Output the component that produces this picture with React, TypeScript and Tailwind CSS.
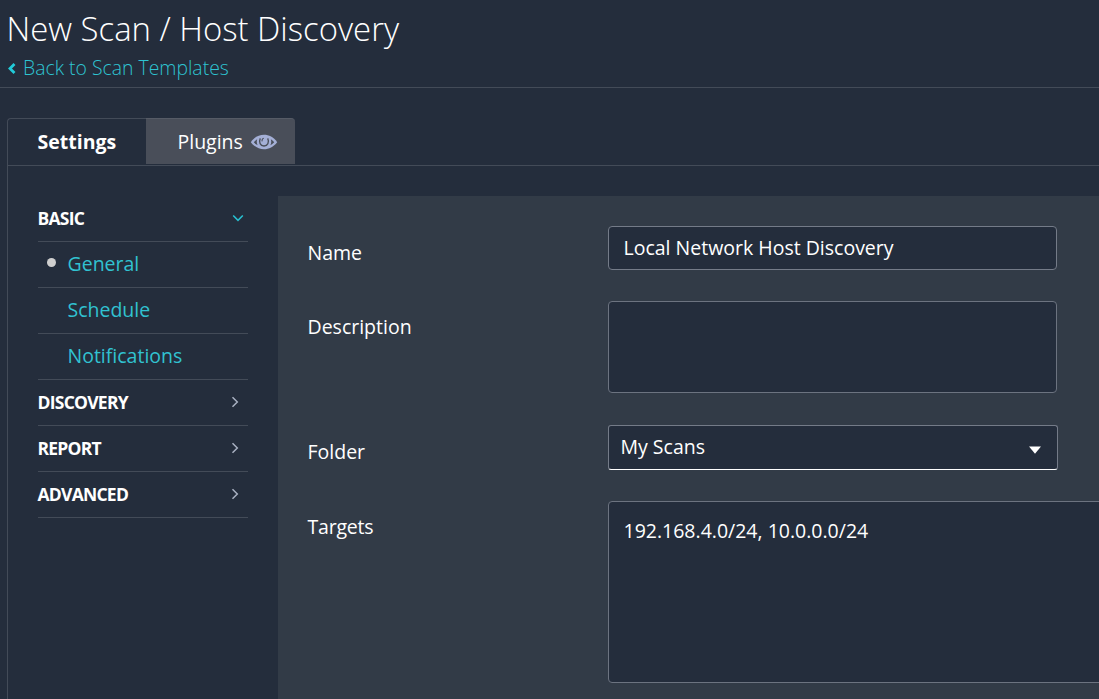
import type { ReactNode } from "react";

const BASIC_ITEMS = ["General", "Schedule", "Notifications"];
const SECTIONS = ["DISCOVERY", "REPORT", "ADVANCED"];

function EyeIcon() {
  return (
    <svg className="ml-[7.5px] mt-px h-[16px] w-[28px]" viewBox="0 0 28 16">
      <path d="M0.8 8.2C4.5 3 9 0.8 14 0.8s9.500 2.200 13.200 7.400C23.500 13 19 15.200 14 15.200S4.500 13 0.800 8.200Z" fill="#a4afd6" />
      <path d="M7.200 5.200C5.500 6.100 4.700 7.300 3.800 8.300c1 1 2 2 3.800 2.900C6.600 9.300 6.500 7.200 7.200 5.200ZM20.800 5.200c1.700.9 2.500 2.100 3.400 3.100-1 1-2 2-3.800 2.900 1-1.900 1.100-4 .4-6Z" fill="#494e59" />
      <path d="M10.300 4.400C8.500 8.200 10.300 12 14 12s5.500-3.800 3.700-7.600" fill="none" stroke="#494e59" strokeWidth="1.300" />
      <path d="M13.800 4.300C12.300 4.600 11.700 6 12.200 7.400" fill="none" stroke="#494e59" strokeWidth="1.100" />
    </svg>
  );
}

function Row({ label, top, children }: { label: string; top: string; children: ReactNode }) {
  return (
    <div className="flex items-start">
      <span className={`w-[300px] shrink-0 leading-[28px] ${top}`}>{label}</span>
      {children}
    </div>
  );
}

export default function App() {
  return (
    <div className="flex h-[699px] w-[1099px] flex-col overflow-hidden bg-[#242d3c] font-['Open_Sans',sans-serif] text-[19.5px] text-white">
      <header className="h-[88px] shrink-0 border-b border-[#434b58] pl-[7px]">
        <h1 className="-ml-[0.5px] pt-[5px] text-[32.900px] leading-[48px] font-light whitespace-nowrap">New Scan / Host Discovery</h1>
        <a className="mt-px flex items-center text-[19.400px] leading-[28px] font-light text-[#2ec4d2]">
          <svg className="mr-[7px] h-[11px] w-[9px]" viewBox="0 0 9 11">
            <path d="M7.500 1 3 5.500l4.500 4.500" fill="none" stroke="#22cbd9" strokeWidth="2.800" />
          </svg>
          Back to Scan Templates
        </a>
      </header>
      <div className="ml-[7px] mt-[30px] flex h-[48px] shrink-0 border-b border-[#434b58]">
        <div className="flex w-[139px] items-center rounded-tl border-t border-l border-[#434b58] pl-[29.500px] font-bold">Settings</div>
        <div className="flex h-[46px] w-[149px] items-center rounded-tr border-t border-[#565b66] bg-[#494e59] pl-[31.500px]">
          Plugins
          <EyeIcon />
        </div>
      </div>
      <div className="ml-[7px] flex flex-1 border-l border-[#434b58] pt-[30px] pl-[30px]">
        <nav className="mr-[30px] w-[210px] shrink-0">
          <div className="flex h-[46px] items-center justify-between border-b border-[#434b58] text-[17.500px] tracking-[-0.75px] font-bold">
            <span className="-ml-[0.5px]">BASIC</span>
            <svg className="mr-[4px] mb-[2px] h-[8px] w-[12px]" viewBox="0 0 12 8">
              <path d="m1.200 1.500 4.800 4.800 4.800-4.800" fill="none" stroke="#28bfd0" strokeWidth="1.600" />
            </svg>
          </div>
          {BASIC_ITEMS.map((item, i) => (
            <div key={item} className="flex h-[46px] items-center border-b border-[#434b58] pb-[2px] text-[#31c2d1]">
              <span className="flex w-[29.500px] pl-[9px]">
                {i === 0 && <span className="-mt-[2px] size-[9px] rounded-full bg-[#cfcfcf]" />}
              </span>
              {item}
            </div>
          ))}
          {SECTIONS.map((item) => (
            <div key={item} className="flex h-[46px] items-center justify-between border-b border-[#434b58] text-[17.500px] tracking-[-0.75px] font-bold">
              <span className="-ml-[0.5px]">{item}</span>
              <svg className="mr-[9px] mb-[1px] h-[12px] w-[8px]" viewBox="0 0 8 12">
                <path d="m1.500 1.200 4.800 4.800-4.800 4.800" fill="none" stroke="#a9b1c2" strokeWidth="1.500" />
              </svg>
            </div>
          ))}
        </nav>
        <main className="flex flex-1 flex-col overflow-hidden bg-[#323b47] pt-[30px] pl-[29.500px]">
          <div className="h-[75px]">
            <Row label="Name" top="pt-[13px]">
              <input className="ml-[0.5px] h-[44px] w-[449px] rounded border border-[#747b88] bg-[#242d3c] px-[14.500px] pb-[2px] outline-none" defaultValue="Local Network Host Discovery" />
            </Row>
          </div>
          <div className="h-[124px]">
            <Row label="Description" top="pt-[12px]">
              <textarea className="ml-[0.5px] h-[92px] w-[449px] resize-none rounded border border-[#6c7380] bg-[#242d3c] outline-none" />
            </Row>
          </div>
          <div className="h-[76px]">
            <Row label="Folder" top="pt-[13px]">
              <div className="ml-[0.5px] flex h-[45px] w-[450px] items-center justify-between rounded-[3px] border border-[#747b88] border-b-white bg-[#242d3c] pr-[15px] pb-[2px] pl-[11.500px]">
                <span>My Scans</span>
                <svg className="mt-[7px] h-[8px] w-[14px]" viewBox="0 0 14 8">
                  <path d="M1 .5h12L7 7.700Z" fill="#fff" />
                </svg>
              </div>
            </Row>
          </div>
          <Row label="Targets" top="pt-[12px] tracking-[-0.2px]">
            <textarea className="ml-[0.5px] h-[182px] w-[520px] shrink-0 resize-none rounded border border-[#6c7380] bg-[#242d3c] px-[14.500px] pt-[15px] leading-[28px] outline-none" defaultValue="192.168.4.0/24, 10.0.0.0/24" />
          </Row>
        </main>
      </div>
    </div>
  );
}
